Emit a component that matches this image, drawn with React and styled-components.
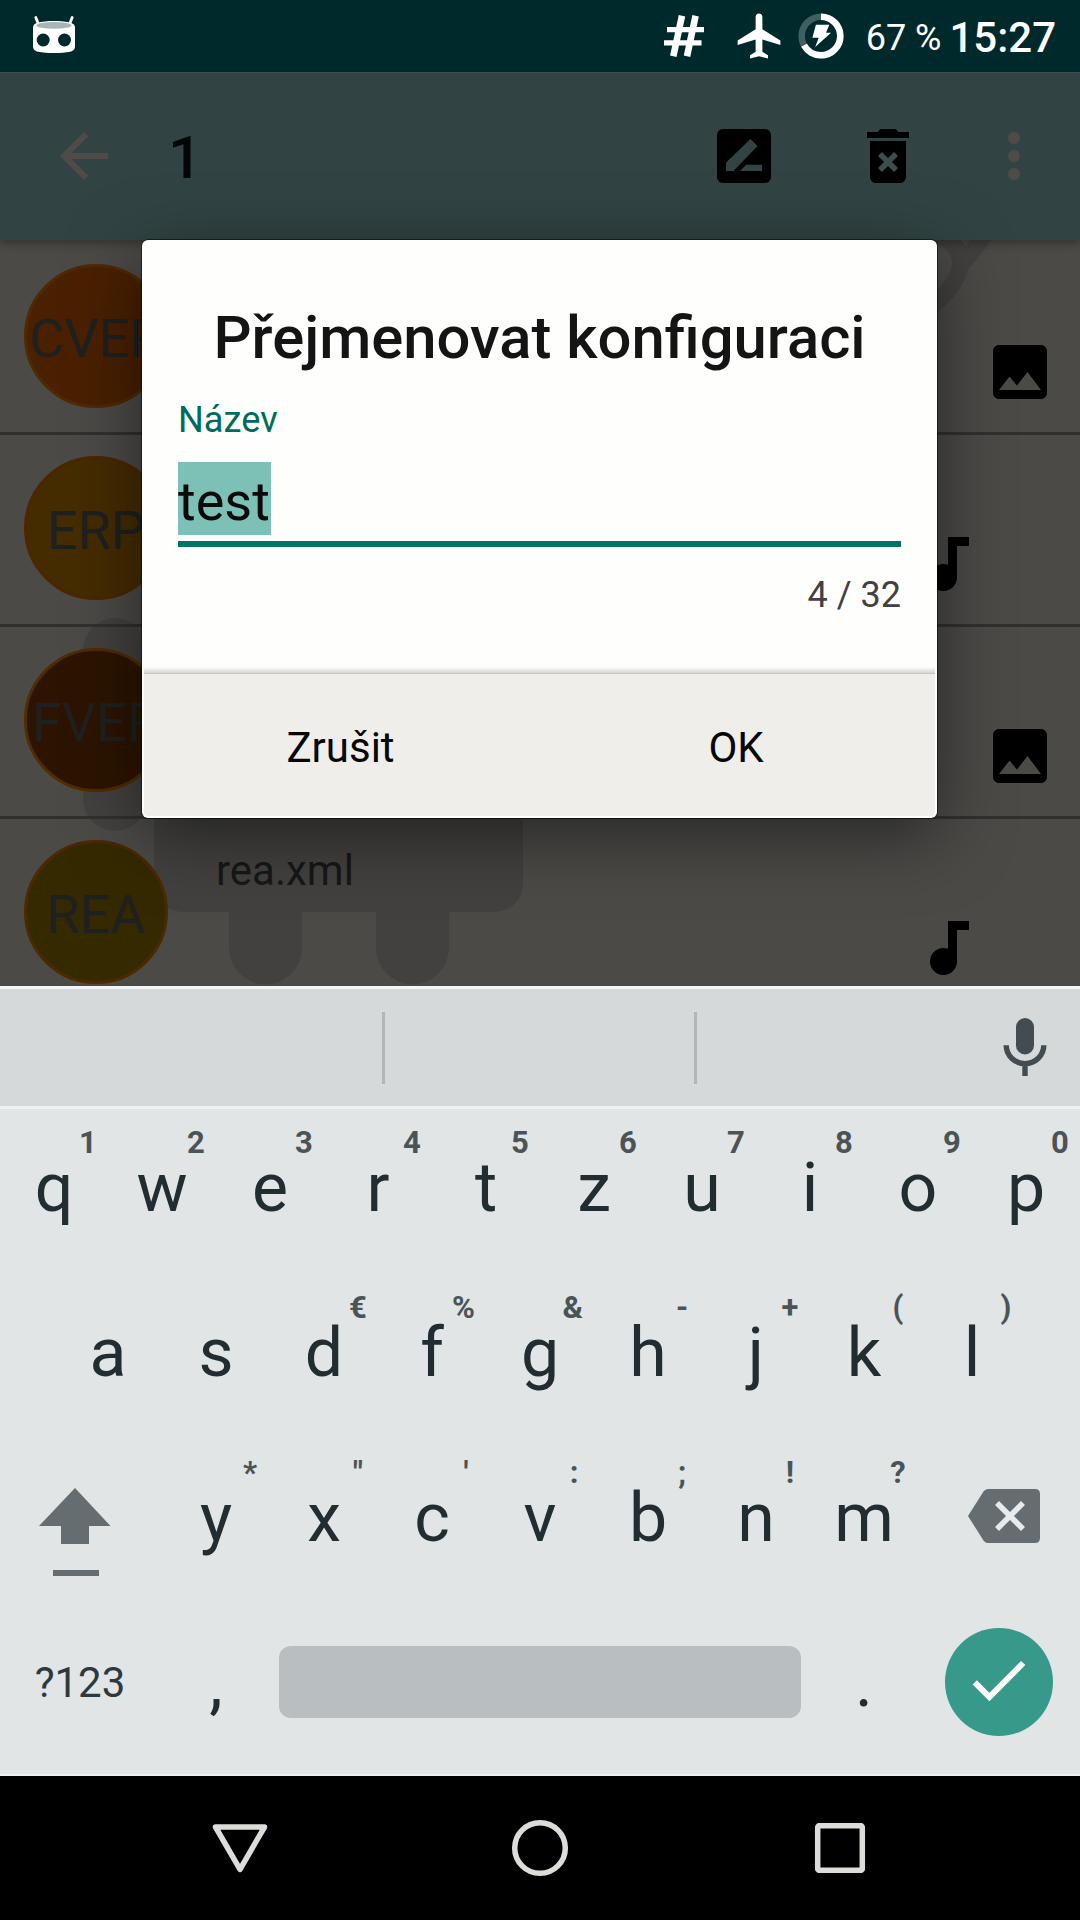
import React from "react";
import styled, { createGlobalStyle } from "styled-components";

const GlobalStyle = createGlobalStyle`
  *, *::before, *::after { box-sizing: border-box; }
  body { margin: 0; background: #000; font-family: Roboto, "Noto Sans", sans-serif; }
  svg { display: block; }
`;

const Screen = styled.div`
  width: 1080px;
  height: 1920px;
  display: flex;
  flex-direction: column;
  overflow: hidden;
`;

/* ---------- status bar ---------- */
const StatusBar = styled.header`
  height: 72px;
  flex: none;
  display: flex;
  align-items: center;
  padding: 0 24px 0 30px;
  background: #00292c;
  color: #fff;
`;
const StatusIcons = styled.div`
  margin-left: auto;
  display: flex;
  align-items: center;
`;
const AirplaneSlot = styled.div`
  margin: 0 12px 0 27px;
`;
const BatteryLevel = styled.span`
  margin-left: 22px;
  padding-top: 3px;
  font-size: 36px;
  line-height: 48px;
`;
const Clock = styled.span`
  margin-left: 8px;
  padding-top: 3px;
  font-size: 42px;
  font-weight: 500;
  line-height: 48px;
`;

/* ---------- application ---------- */
const AppArea = styled.main`
  position: relative;
  height: 914px;
  flex: none;
  display: flex;
  flex-direction: column;
  background: #4b4a47;
  overflow: hidden;
`;
const Toolbar = styled.div`
  position: relative;
  z-index: 1;
  height: 168px;
  flex: none;
  display: flex;
  align-items: center;
  padding: 0 30px 0 48px;
  background: #314443;
  box-shadow: inset 0 1px 0 #404e4d, 0 2px 10px rgba(0, 0, 0, 0.4);
`;
const ToolbarTitle = styled.h1`
  margin: 0 auto 0 48px;
  padding-top: 4px;
  font-size: 60px;
  font-weight: 500;
  line-height: 72px;
  color: #060606;
`;
const Actions = styled.div`
  display: flex;
  align-items: center;
  gap: 72px;
`;
const MoreSlot = styled.div`
  margin-left: -18px;
`;
const List = styled.ul`
  position: relative;
  flex: none;
  height: 768px;
  margin: 0;
  padding: 0;
  list-style: none;
`;
const Watermark = styled.svg`
  position: absolute;
  left: 0;
  top: 0;
`;
const Row = styled.li`
  position: relative;
  height: 192px;
  display: flex;
  align-items: center;
  padding: 0 24px;
  box-shadow: ${(p) => (p.$divided ? "inset 0 3px 0 #31302e" : "none")};
`;
const Avatar = styled.div`
  width: 144px;
  height: 144px;
  flex: none;
  display: flex;
  align-items: center;
  justify-content: center;
  padding-top: 6px;
  border-radius: 50%;
  border: 3px solid ${(p) => p.$ring};
  background: ${(p) => p.$fill};
  color: #1f2020;
  font-size: 54px;
  line-height: 64px;
  white-space: nowrap;
`;
const FileName = styled.span`
  align-self: flex-start;
  margin: 30px 0 0 48px;
  font-size: 42px;
  line-height: 50px;
  color: #171717;
`;
const Badges = styled.div`
  margin-left: auto;
  align-self: flex-end;
  display: grid;
  grid-template-columns: 72px 72px;
  padding-bottom: 24px;
`;
const BadgeSlot = styled.div`
  grid-column: ${(p) => p.$column};
`;

/* ---------- dialog ---------- */
const DialogLayer = styled.div`
  position: absolute;
  inset: 0 1px 0 0;
  z-index: 2;
  display: flex;
  align-items: center;
  justify-content: center;
`;
const Dialog = styled.section`
  width: 795px;
  height: 578px;
  display: flex;
  flex-direction: column;
  border-radius: 6px;
  background: #fefefd;
  box-shadow: 0 0 0 1px rgba(0, 0, 0, 0.5), 0 16px 70px rgba(0, 0, 0, 0.5);
`;
const DialogBody = styled.div`
  height: 427px;
  flex: none;
  display: flex;
  flex-direction: column;
  padding: 62px 36px 0;
`;
const DialogTitle = styled.h2`
  margin: 0;
  text-align: center;
  font-size: 59.8px;
  font-weight: 500;
  line-height: 72px;
  color: #141414;
  white-space: nowrap;
`;
const FieldLabel = styled.label`
  margin-top: 22px;
  font-size: 36.2px;
  line-height: 48px;
  color: #006b5d;
`;
const Field = styled.div`
  height: 103px;
  padding-top: 18px;
  border-bottom: 6px solid #007566;
`;
const Selection = styled.span`
  display: inline-block;
  height: 73px;
  width: 93px;
  padding-top: 5px;
  background: #7dc0b6;
  font-size: 54px;
  line-height: 70px;
  color: #0a0a0a;
`;
const Counter = styled.span`
  margin-top: 24px;
  text-align: right;
  font-size: 36px;
  line-height: 48px;
  color: #414141;
`;
const FooterShade = styled.div`
  height: 7px;
  margin: 0 2px;
  border-bottom: 1px solid #c6c6c4;
  background: linear-gradient(rgba(0, 0, 0, 0), rgba(0, 0, 0, 0.16));
`;
const DialogFooter = styled.div`
  flex: 1;
  display: grid;
  grid-template-columns: 393px 1fr;
  margin: 0 2px 2px;
  border-radius: 0 0 4px 4px;
  background: #efeeeb;
`;
const DialogButton = styled.button`
  border: 0;
  padding: 5px 0 0;
  background: none;
  font: 400 42px/50px Roboto, sans-serif;
  color: #060606;
`;

/* ---------- keyboard ---------- */
const Keyboard = styled.section`
  height: 790px;
  flex: none;
  display: flex;
  flex-direction: column;
  background: #e1e5e6;
  border-bottom: 2px solid #edf1f2;
`;
const Suggestions = styled.div`
  height: 123px;
  flex: none;
  display: flex;
  align-items: center;
  border-top: 3px solid #f4f6f6;
  border-bottom: 3px solid #eef1f2;
  background: #d5d9da;
`;
const SuggestionCell = styled.div`
  width: ${(p) => p.$width}px;
  height: 72px;
  border-right: 3px solid #b1b6b7;
`;
const MicSlot = styled.div`
  margin-left: auto;
  padding: 0 31px 2px 0;
`;
const Keys = styled.div`
  flex: 1;
  display: flex;
  flex-direction: column;
  gap: 9px;
`;
const KeyRow = styled.div`
  height: 156px;
  display: flex;
  padding: 0 ${(p) => p.$inset || 0}px;
`;
const Key = styled.div`
  position: relative;
  width: ${(p) => p.$width || 108}px;
  flex: none;
  display: flex;
  align-items: center;
  justify-content: center;
  padding: ${(p) => (p.$glyph ? 0 : p.$small ? "2px 2px 0 0" : "2px 0 0 0")};
  font-size: ${(p) => (p.$small ? 42 : 68)}px;
  line-height: 80px;
  color: ${(p) => (p.$small ? "#2d393d" : "#222d31")};
`;
const Hint = styled.sup`
  position: absolute;
  top: 16px;
  right: 11px;
  min-width: 18px;
  text-align: center;
  font-size: 31px;
  font-weight: 700;
  line-height: 36px;
  color: #4a5457;
`;
const SpaceBar = styled.div`
  width: 522px;
  height: 72px;
  border-radius: 12px;
  background: #b9bec1;
`;
const EnterKey = styled.div`
  width: 108px;
  height: 108px;
  border-radius: 50%;
  background: #36998a;
`;

/* ---------- navigation bar ---------- */
const NavBar = styled.nav`
  height: 144px;
  flex: none;
  display: flex;
  align-items: center;
  justify-content: center;
  gap: 222px;
  background: #000;
`;

const RobotIcon = () => (
  <svg width="48" height="42" viewBox="30 15 48 42">
    <path d="M35.8 17.5l3.2 8M72.2 17.5l-3.2 8" stroke="#fff" strokeWidth="2.8" strokeLinecap="round" />
    <path d="M33 27.5c0-3 2-4 4.500-4.800c8-2.300 25-2.300 33 0c2.500.8 4.500 1.800 4.500 4.800v18.500c0 3.500-2 5-5 5.700c-8 1.800-24 1.800-32 0c-3-.7-5-2.200-5-5.700z" fill="#fff" />
    <ellipse cx="54" cy="25.400" rx="17.500" ry="3.400" fill="#a6b6b7" />
    <circle cx="43.200" cy="40" r="6.500" fill="#00292c" />
    <circle cx="64.500" cy="40" r="6.500" fill="#00292c" />
  </svg>
);

const RootIcon = () => (
  <svg width="42" height="42" viewBox="662 15 42 42" stroke="#fff">
    <path d="M681 15.700L672.300 56.300M694.600 15.700L686 56.300" strokeWidth="6.600" />
    <path d="M666 29.600H703M663 42.800H700.500" strokeWidth="5.200" />
  </svg>
);

const AirplaneIcon = () => (
  <svg width="54" height="54" viewBox="0 0 24 24" fill="#fff">
    <path d="M21.500 16v-2l-8-5V3.500c0-.83-.67-1.500-1.500-1.500s-1.500.67-1.500 1.500V9l-8 5v2l8-2.500V19l-2.500 1.500V22l4-1 4 1v-1.500L13.500 19v-5.500l8 2.500z" />
  </svg>
);

const BatteryIcon = () => (
  <svg width="46" height="46" viewBox="797.300 13 46 46">
    <circle cx="820.300" cy="36" r="19.300" fill="none" stroke="#3f5f61" strokeWidth="6.600" />
    <circle
      cx="820.300" cy="36" r="19.300" fill="none" stroke="#fff" strokeWidth="6.600"
      pathLength="100" strokeDasharray="67 33" transform="rotate(-90 820.300 36)"
    />
    <path d="M815.200 24.700H828.600L825.300 32.700H830.300L814.500 47L818 37.700H811.700Z" fill="#fff" />
  </svg>
);

const BackArrow = () => (
  <svg width="72" height="72" viewBox="0 0 24 24" fill="#4f4b49">
    <path d="M20 11H7.830l5.590-5.590L12 4l-8 8 8 8 1.410-1.410L7.830 13H20v-2z" />
  </svg>
);

const RenameIcon = () => (
  <svg width="72" height="72" viewBox="708 120 72 72">
    <rect x="717" y="129" width="54" height="54" rx="6" fill="#000" />
    <path d="M726 171v-8.500l24.500-23.500 7 7L733.500 171zM740 171l6-6.300H762V171z" fill="#314443" />
  </svg>
);

const TrashIcon = () => (
  <svg width="72" height="72" viewBox="852 120 72 72">
    <path d="M867 132h10.500l3-3h15l3 3H909v6H867zM870 141h36v36c0 3.300-2.700 6-6 6h-24c-3.300 0-6-2.700-6-6z" fill="#000" />
    <path d="M880 154l16 16M896 154l-16 16" stroke="#3a4f4e" strokeWidth="5.400" />
  </svg>
);

const MoreIcon = () => (
  <svg width="72" height="72" viewBox="0 0 24 24" fill="#4f4b49">
    <circle cx="12" cy="6" r="2" />
    <circle cx="12" cy="12" r="2" />
    <circle cx="12" cy="18" r="2" />
  </svg>
);

const ImageIcon = () => (
  <svg width="72" height="72" viewBox="0 0 24 24">
    <path d="M21 19V5c0-1.100-.9-2-2-2H5c-1.100 0-2 .9-2 2v14c0 1.100.9 2 2 2h14c1.100 0 2-.9 2-2zM8.500 13.500l2.500 3.010L14.500 12l4.500 6H5l3.500-4.500z" />
  </svg>
);

const MusicIcon = () => (
  <svg width="72" height="72" viewBox="0 0 24 24">
    <path d="M12 3v9.280c-.47-.17-.97-.28-1.500-.28C8.010 12 6 14.010 6 16.500S8.010 21 10.500 21c2.310 0 4.200-1.750 4.450-4H15V6h4V3h-7z" />
  </svg>
);

const MicIcon = () => (
  <svg width="48" height="60" viewBox="1001 1017 48 60">
    <rect x="1016" y="1018" width="18" height="36.500" rx="9" fill="#434c51" />
    <path d="M1006.200 1045.300a18.800 18.300 0 0 0 37.600 0M1025 1063V1076" fill="none" stroke="#434c51" strokeWidth="5.400" />
  </svg>
);

const ShiftIcon = () => (
  <svg width="162" height="156" viewBox="0 1439 162 156" fill="#656d70">
    <path d="M75 1488L110.500 1526H89V1544H61V1526H39ZM53 1570H99V1576H53Z" />
  </svg>
);

const BackspaceIcon = () => (
  <svg width="162" height="156" viewBox="918 1439 162 156">
    <path d="M968 1516L983.500 1491.500Q985.200 1489 988 1489H1035Q1040 1489 1040 1494V1538Q1040 1543 1035 1543H988Q985.200 1543 983.500 1540.500Z" fill="#656d70" />
    <path d="M997 1503L1023 1529M1023 1503L997 1529" stroke="#e8ebec" strokeWidth="5.600" />
  </svg>
);

const CheckIcon = () => (
  <svg width="108" height="108" viewBox="945 1628 108 108">
    <path d="M974.800 1682.300L989.400 1697L1023.200 1663" fill="none" stroke="#fff" strokeWidth="6" />
  </svg>
);

const NavIcon = ({ children }) => (
  <svg width="78" height="78" viewBox="-39 -39 78 78" fill="none" stroke="#dddcd8" strokeWidth="5.500" strokeLinejoin="round">
    {children}
  </svg>
);

const rows = [
  { label: "CVER", fill: "#4a2000", ring: "#4f2a00", kind: "image" },
  { label: "ERP", fill: "#452c00", ring: "#4d2600", kind: "music" },
  { label: "FVER", fill: "#2c1400", ring: "#502c00", kind: "image" },
  { label: "REA", fill: "#352900", ring: "#4d2900", kind: "music", file: "rea.xml" },
];

const keyRows = [
  ["q1", "w2", "e3", "r4", "t5", "z6", "u7", "i8", "o9", "p0"],
  ["a", "s", "d€", "f%", "g&", "h-", "j+", "k(", "l)"],
  ["y*", 'x"', "c'", "v:", "b;", "n!", "m?"],
];

const LetterKeys = ({ keys }) =>
  keys.map(([letter, hint]) => (
    <Key key={letter}>
      {letter}
      {hint && <Hint>{hint}</Hint>}
    </Key>
  ));

export default function App() {
  return (
    <Screen>
      <GlobalStyle />
      <StatusBar>
        <RobotIcon />
        <StatusIcons>
          <RootIcon />
          <AirplaneSlot><AirplaneIcon /></AirplaneSlot>
          <BatteryIcon />
          <BatteryLevel>67 %</BatteryLevel>
          <Clock>15:27</Clock>
        </StatusIcons>
      </StatusBar>

      <AppArea>
        <Toolbar>
          <BackArrow />
          <ToolbarTitle>1</ToolbarTitle>
          <Actions>
            <RenameIcon />
            <TrashIcon />
            <MoreSlot><MoreIcon /></MoreSlot>
          </Actions>
        </Toolbar>
        <List>
          <Watermark width="1080" height="768" viewBox="0 240 1080 768" fill="#000" fillOpacity="0.11">
            <rect x="83" y="618" width="64" height="213" rx="32" />
            <path d="M154 600H523V884a28 28 0 0 1-28 28H449V948a36.500 36.500 0 0 1-73 0V912H302V948a36.500 36.500 0 0 1-73 0V912H182a28 28 0 0 1-28-28Z" />
            <path fillRule="evenodd" d="M900 240H991.500Q980 257 969 268Q962 293 938 312L900 330ZM900 238Q952 240 952 263Q950 280 930 296L900 300ZM961 240L966 246L970 240Z" />
          </Watermark>
          {rows.map((r, i) => (
            <Row key={r.label} $divided={i > 0}>
              <Avatar $fill={r.fill} $ring={r.ring}>{r.label}</Avatar>
              {r.file && <FileName>{r.file}</FileName>}
              <Badges>
                <BadgeSlot $column={r.kind === "image" ? 2 : 1}>
                  {r.kind === "image" ? <ImageIcon /> : <MusicIcon />}
                </BadgeSlot>
              </Badges>
            </Row>
          ))}
        </List>

        <DialogLayer>
          <Dialog>
            <DialogBody>
              <DialogTitle>Přejmenovat konfiguraci</DialogTitle>
              <FieldLabel>Název</FieldLabel>
              <Field><Selection>test</Selection></Field>
              <Counter>4 / 32</Counter>
            </DialogBody>
            <FooterShade />
            <DialogFooter>
              <DialogButton>Zrušit</DialogButton>
              <DialogButton>OK</DialogButton>
            </DialogFooter>
          </Dialog>
        </DialogLayer>
      </AppArea>

      <Keyboard>
        <Suggestions>
          <SuggestionCell $width={385} />
          <SuggestionCell $width={312} />
          <MicSlot><MicIcon /></MicSlot>
        </Suggestions>
        <Keys>
          <KeyRow><LetterKeys keys={keyRows[0]} /></KeyRow>
          <KeyRow $inset={54}><LetterKeys keys={keyRows[1]} /></KeyRow>
          <KeyRow>
            <Key $width={162} $glyph><ShiftIcon /></Key>
            <LetterKeys keys={keyRows[2]} />
            <Key $width={162} $glyph><BackspaceIcon /></Key>
          </KeyRow>
          <KeyRow>
            <Key $width={162} $small>?123</Key>
            <Key>,</Key>
            <Key $width={540} $glyph><SpaceBar /></Key>
            <Key>.</Key>
            <Key $width={162} $glyph><EnterKey><CheckIcon /></EnterKey></Key>
          </KeyRow>
        </Keys>
      </Keyboard>

      <NavBar>
        <NavIcon><path d="M-24.500 -21H24.500L0 21.300Z" /></NavIcon>
        <NavIcon><circle r="25.300" /></NavIcon>
        <NavIcon><rect x="-22.300" y="-22.300" width="44.600" height="44.600" rx="1.500" /></NavIcon>
      </NavBar>
    </Screen>
  );
}
